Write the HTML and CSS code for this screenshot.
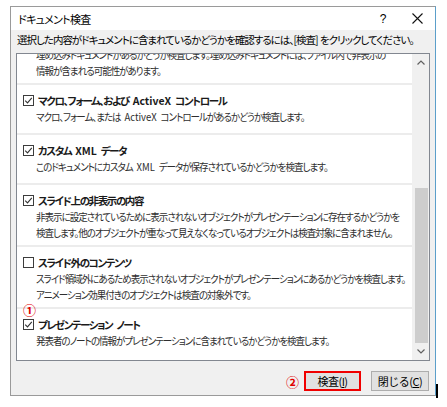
FILE: index.html
```html
<!DOCTYPE html>
<html lang="ja">
<head>
<meta charset="utf-8">
<title>ドキュメント検査</title>
<link rel="stylesheet" href="styles.css">
</head>
<body>
<div class="window">
  <div class="titlebar">
    <span class="title">ドキュメント検査</span>
    <span class="help">?</span>
    <span class="close"><svg width="11" height="11" viewBox="0 0 11 11"><path d="M0.5 0.5 L10.5 10.5 M10.5 0.5 L0.5 10.5" stroke="#111" stroke-width="1.1" fill="none"/></svg></span>
  </div>
  <div class="client">
    <p class="intro">選択した内容がドキュメントに含まれているかどうかを確認するには、[検査] をクリックしてください。</p>
    <div class="listbox">
      <div class="viewport">
        <div class="items">
          <div class="item partial">
            <p class="desc"><span class="line">埋め込みドキュメントがあるかどうか検査します。埋め込みドキュメントには、ファイル内で非表示の</span><span class="line">情報が含まれる可能性があります。</span></p>
          </div>
          <div class="item">
            <div class="head"><span class="cb checked"><svg width="9" height="9" viewBox="0 0 9 9"><path d="M1.2 4.6 L3.5 6.9 L7.8 1.8" stroke="#333" stroke-width="1.1" fill="none"/></svg></span><span class="name">マクロ、フォーム、および <span class="latin">ActiveX</span> コントロール</span></div>
            <p class="desc"><span class="line">マクロ、フォーム、または <span class="latin">ActiveX</span> コントロールがあるかどうか検査します。</span></p>
          </div>
          <div class="item">
            <div class="head"><span class="cb checked"><svg width="9" height="9" viewBox="0 0 9 9"><path d="M1.2 4.6 L3.5 6.9 L7.8 1.8" stroke="#333" stroke-width="1.1" fill="none"/></svg></span><span class="name">カスタム <span class="latin">XML</span> データ</span></div>
            <p class="desc"><span class="line">このドキュメントにカスタム <span class="latin">XML</span> データが保存されているかどうかを検査します。</span></p>
          </div>
          <div class="item">
            <div class="head"><span class="cb checked"><svg width="9" height="9" viewBox="0 0 9 9"><path d="M1.2 4.6 L3.5 6.9 L7.8 1.8" stroke="#333" stroke-width="1.1" fill="none"/></svg></span><span class="name">スライド上の非表示の内容</span></div>
            <p class="desc"><span class="line">非表示に設定されているために表示されないオブジェクトがプレゼンテーションに存在するかどうかを</span><span class="line">検査します。他のオブジェクトが重なって見えなくなっているオブジェクトは検査対象に含まれません。</span></p>
          </div>
          <div class="item">
            <div class="head"><span class="cb"></span><span class="name">スライド外のコンテンツ</span></div>
            <p class="desc"><span class="line">スライド領域外にあるため表示されないオブジェクトがプレゼンテーションにあるかどうかを検査します。</span><span class="line">アニメーション効果付きのオブジェクトは検査の対象外です。</span></p>
          </div>
          <div class="item last">
            <span class="mark mark-1">①</span>
            <div class="head"><span class="cb checked"><svg width="9" height="9" viewBox="0 0 9 9"><path d="M1.2 4.6 L3.5 6.9 L7.8 1.8" stroke="#333" stroke-width="1.1" fill="none"/></svg></span><span class="name">プレゼンテーション ノート</span></div>
            <p class="desc"><span class="line">発表者のノートの情報がプレゼンテーションに含まれているかどうかを検査します。</span></p>
          </div>
        </div>
      </div>
      <div class="scrollbar">
        <span class="arrow"><svg width="8" height="5" viewBox="0 0 8 5"><path d="M0.5 4.5 L4 1 L7.5 4.5" stroke="#606060" stroke-width="1.2" fill="none"/></svg></span>
        <div class="track"><div class="thumb"></div></div>
        <span class="arrow"><svg width="8" height="5" viewBox="0 0 8 5"><path d="M0.5 0.5 L4 4 L7.5 0.5" stroke="#606060" stroke-width="1.2" fill="none"/></svg></span>
      </div>
    </div>
    <div class="buttons">
      <span class="mark mark-2">②</span>
      <button class="btn btn-default" type="button">検査(<u>I</u>)</button>
      <button class="btn" type="button">閉じる(<u>C</u>)</button>
    </div>
  </div>
</div>
</body>
</html>
```

FILE: styles.css
```css
* { box-sizing: border-box; }

html, body {
  margin: 0;
  padding: 0;
}

body {
  width: 447px;
  height: 407px;
  overflow: hidden;
  background: #fff;
  color: #000;
  font-family: "Noto Sans CJK JP", "Noto Sans", sans-serif;
  font-feature-settings: "palt" 1;
  font-variant-east-asian: proportional-width;
}

.window {
  position: relative;
  margin: 6px 0 0 10px;
  width: 426px;
  height: 390px;
  border: 1px solid #9a9a9a;
  border-right-color: #5b9fca;
  display: flex;
  flex-direction: column;
  background: #f0f0f0;
}

.window::after {
  content: "";
  position: absolute;
  right: -3px;
  bottom: -3px;
  width: 2px;
  height: 14px;
  background: #000;
}

.titlebar {
  height: 23px;
  background: #fff;
  display: flex;
  align-items: center;
  padding-left: 7px;
}

.title {
  font-size: 11px;
  letter-spacing: -0.7px;
  margin-right: auto;
}

.help {
  width: 30px;
  margin-right: 4px;
  text-align: center;
  font-size: 12px;
  font-family: "Liberation Sans", sans-serif;
}

.close {
  width: 30px;
  margin-right: 3px;
  display: flex;
  justify-content: center;
}

.client {
  flex: 1;
  display: flex;
  flex-direction: column;
  padding: 2px 5px 0 5px;
}

.intro {
  margin: 0 0 5px 1px;
  font-size: 10.5px;
  line-height: 16px;
  letter-spacing: -1px;
  word-spacing: 1px;
  white-space: nowrap;
}

.listbox {
  height: 308px;
  border: 1px solid #828790;
  background: #fff;
  display: flex;
}

.viewport {
  flex: 1;
  overflow: hidden;
}

.items {
  margin-top: -8px;
}

.item {
  position: relative;
  padding: 7px 0 4px 0;
  border-bottom: 2px solid #ececec;
}

.item.partial {
  padding-top: 0;
}

.item.last {
  border-bottom: none;
}

.head {
  height: 16px;
  display: flex;
  align-items: center;
  gap: 4px;
  padding-left: 6px;
}

.cb {
  width: 11px;
  height: 11px;
  border: 1px solid #3c3c3c;
  background: #fff;
  display: flex;
  align-items: center;
  justify-content: center;
  flex: none;
}

.name {
  font-size: 10.5px;
  font-weight: bold;
  letter-spacing: -1.4px;
  word-spacing: 3px;
  color: #1a1a1a;
  white-space: nowrap;
}

.latin {
  letter-spacing: 0;
}

.desc {
  margin: 1px 0 0 0;
  padding-left: 19px;
  min-height: 20px;
  font-size: 10.5px;
  line-height: 16px;
  color: #2e2e2e;
  white-space: nowrap;
}

.line {
  display: block;
  letter-spacing: -1.1px;
  word-spacing: 3px;
  transform: scaleX(0.905);
  transform-origin: 0 50%;
}

.line .latin {
  letter-spacing: 0;
}

.mark {
  color: #e00000;
  font-size: 13px;
  line-height: 13px;
  font-weight: bold;
}

.mark-1 {
  position: absolute;
  top: -6px;
  left: 6px;
}

.scrollbar {
  width: 17px;
  flex: none;
  background: #f0f0f0;
  display: flex;
  flex-direction: column;
}

.arrow {
  height: 17px;
  display: flex;
  align-items: center;
  justify-content: center;
}

.track {
  flex: 1;
  display: flex;
  flex-direction: column;
  justify-content: flex-end;
}

.thumb {
  height: 155px;
  margin: 0 1px 0 3px;
  background: #cdcdcd;
}

.buttons {
  display: flex;
  justify-content: flex-end;
  align-items: center;
  margin-top: 10px;
  padding-right: 1px;
}

.mark-2 {
  margin-right: 5px;
}

.btn {
  height: 20px;
  width: 58px;
  padding: 0;
  margin-left: 10px;
  font-family: inherit;
  font-size: 11px;
  letter-spacing: -0.5px;
  color: #000;
  background: #e1e1e1;
  border: 1px solid #adadad;
}

.btn-default {
  width: 57px;
  margin-left: 0;
  border: 2px solid #f00000;
}
```
